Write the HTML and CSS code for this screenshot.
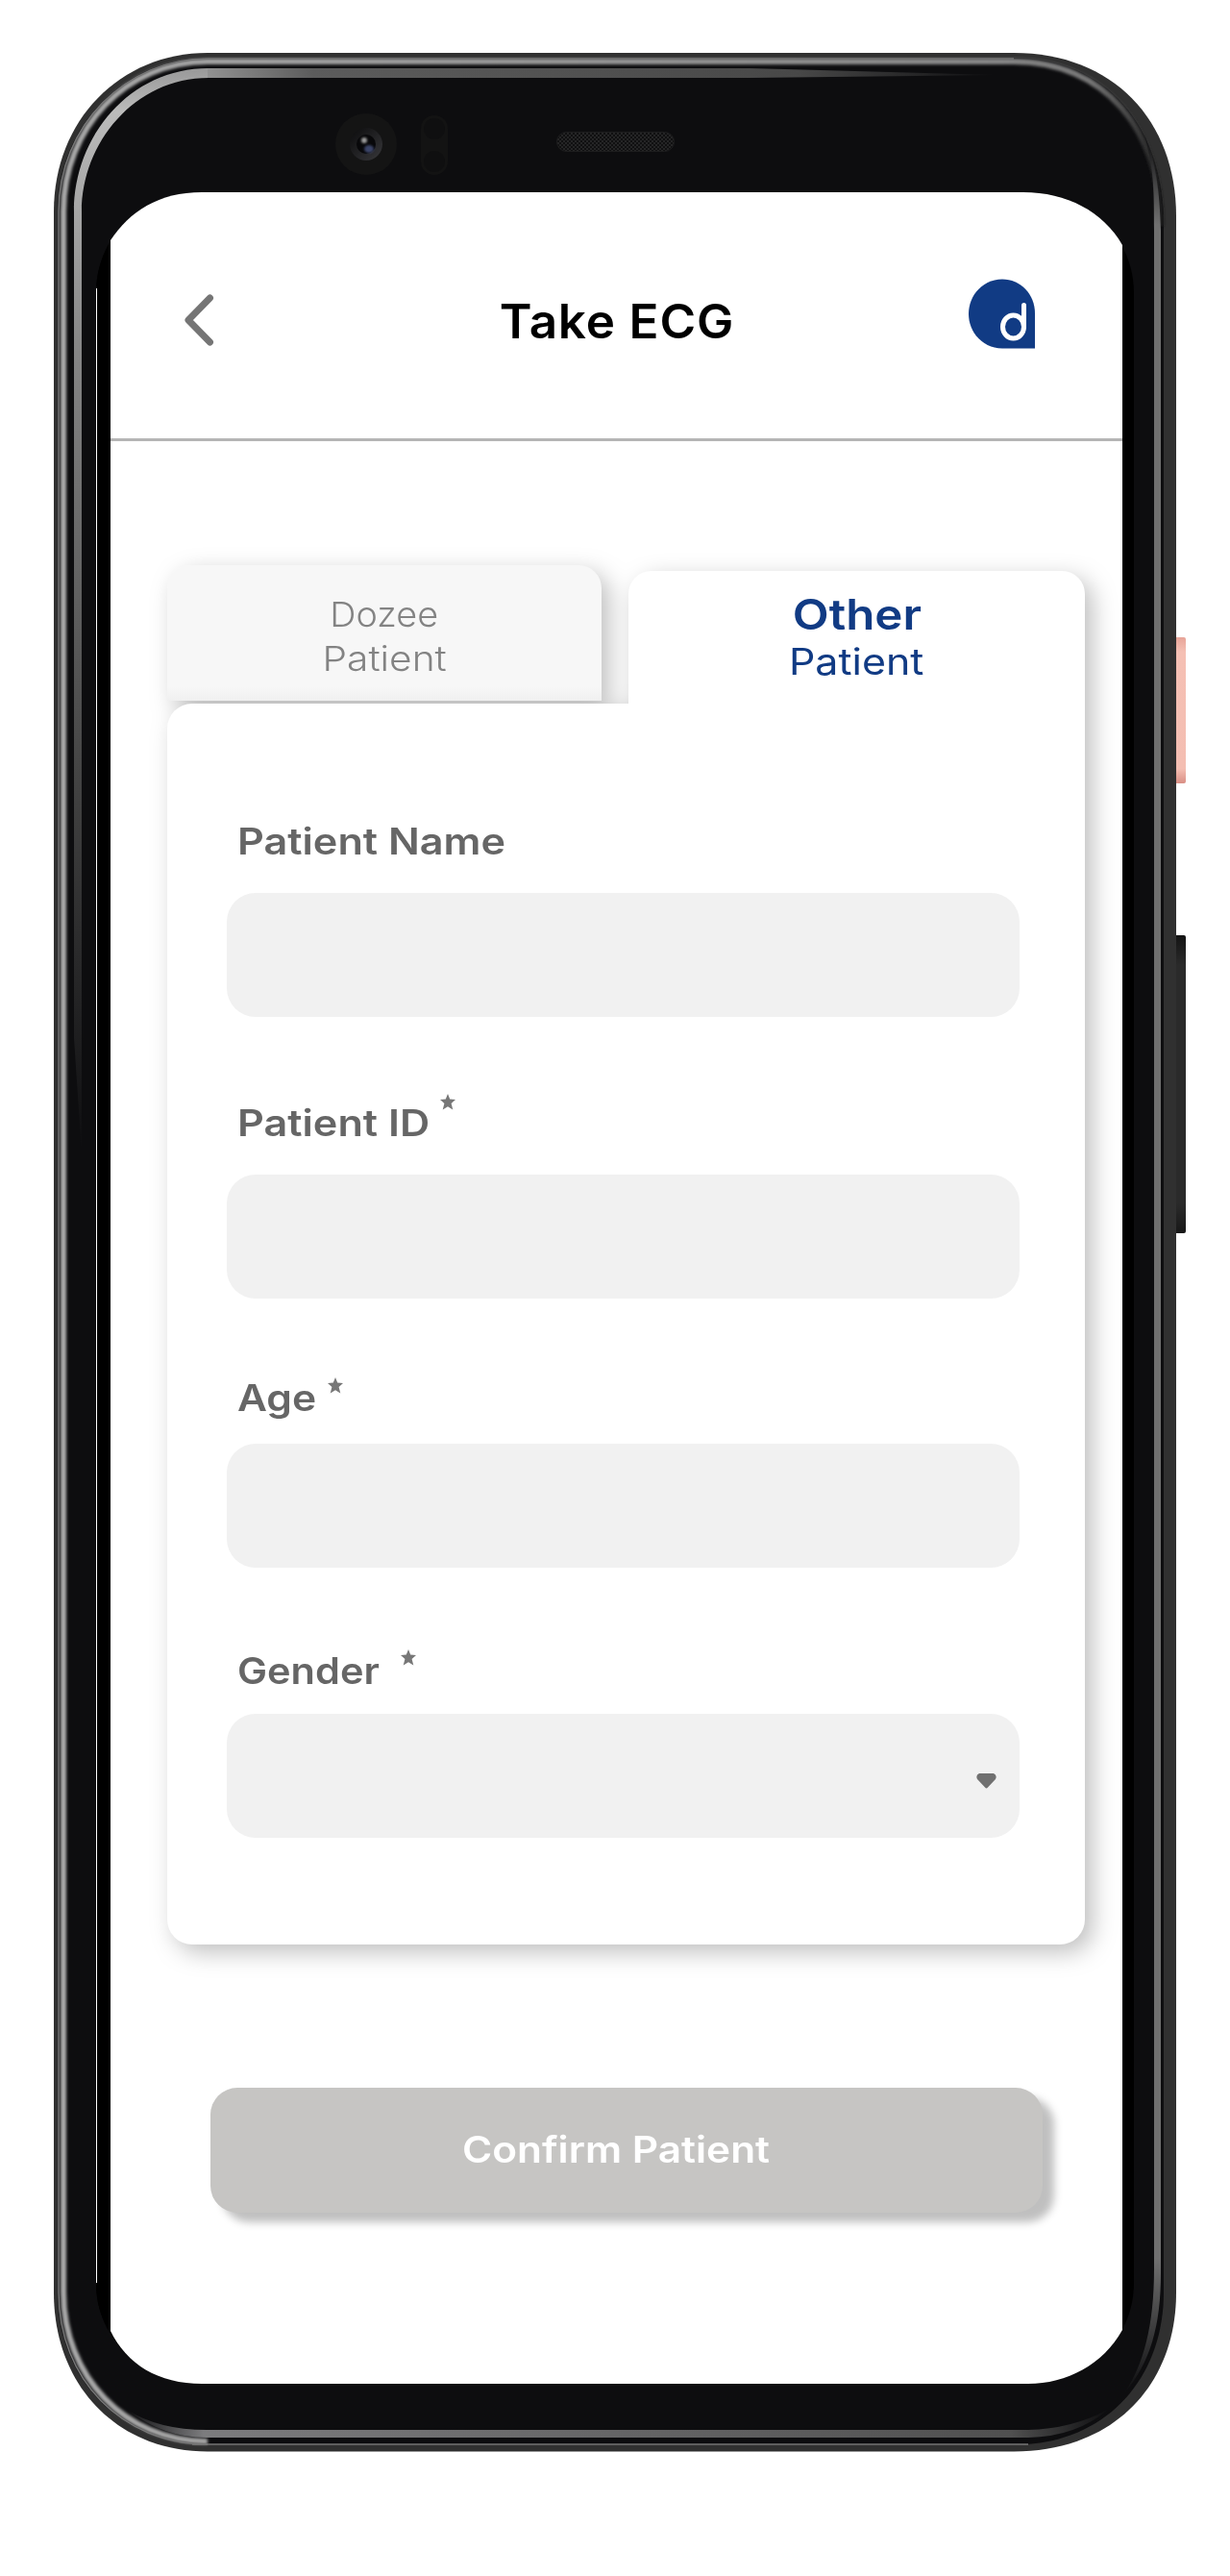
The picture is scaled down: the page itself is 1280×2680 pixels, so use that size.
FILE: index.html
```html
<!DOCTYPE html>
<html lang="en">
<head>
<meta charset="utf-8">
<title>Take ECG</title>
<link rel="stylesheet" href="styles.css">
</head>
<body>
<div class="phone">
  <svg class="frame" viewBox="0 0 1280 2680" aria-hidden="true">
    <defs>
      <linearGradient id="topGlow" gradientUnits="userSpaceOnUse" x1="200" y1="0" x2="1040" y2="0">
        <stop offset="0" stop-color="#999"/><stop offset=".15" stop-color="#5c5c5c"/><stop offset=".75" stop-color="#484848"/><stop offset="1" stop-color="#0d0d0f"/>
      </linearGradient>
      <linearGradient id="leftGlow" x1="0" y1="0" x2="0" y2="1">
        <stop offset="0" stop-color="#999"/><stop offset=".04" stop-color="#bbb"/><stop offset=".25" stop-color="#888"/><stop offset=".65" stop-color="#444"/><stop offset="1" stop-color="#0d0d0f"/>
      </linearGradient>
      <linearGradient id="rightGlow" gradientUnits="userSpaceOnUse" x1="0" y1="140" x2="0" y2="2490">
        <stop offset="0" stop-color="#0d0d0f"/><stop offset=".04" stop-color="#707070"/><stop offset=".94" stop-color="#707070"/><stop offset="1" stop-color="#0d0d0f"/>
      </linearGradient>
      <linearGradient id="rim" gradientUnits="userSpaceOnUse" x1="60" y1="0" x2="1215" y2="0">
        <stop offset="0" stop-color="#aaa"/><stop offset=".85" stop-color="#888"/><stop offset=".93" stop-color="#777"/><stop offset="1" stop-color="#151515"/>
      </linearGradient>
      <linearGradient id="bottomGlow" gradientUnits="userSpaceOnUse" x1="130" y1="0" x2="1155" y2="0">
        <stop offset="0" stop-color="#0d0d0f"/><stop offset=".08" stop-color="#7c7c7e"/><stop offset=".9" stop-color="#505050"/><stop offset="1" stop-color="#0d0d0f"/>
      </linearGradient>
      <linearGradient id="power" x1="0" y1="0" x2="0" y2="1">
        <stop offset="0" stop-color="#e7a498"/><stop offset=".1" stop-color="#f5c0b4"/><stop offset=".9" stop-color="#f4beb2"/><stop offset="1" stop-color="#d98f85"/>
      </linearGradient>
      <linearGradient id="volume" x1="0" y1="0" x2="0" y2="1">
        <stop offset="0" stop-color="#141414"/><stop offset=".1" stop-color="#2a2a2a"/><stop offset=".9" stop-color="#2a2a2a"/><stop offset="1" stop-color="#181818"/>
      </linearGradient>
      <linearGradient id="lens" x1="0" y1="0" x2="1" y2="1">
        <stop offset="0" stop-color="#0b0b0c"/><stop offset="1" stop-color="#38383b"/>
      </linearGradient>
      <pattern id="mesh" width="4" height="4" patternUnits="userSpaceOnUse">
        <path d="M0 0h4v4h-4z" fill="#101011"/><path d="M0 0h2v2h-2zM2 2h2v2h-2z" fill="#252526"/>
      </pattern>
      <filter id="soft1" x="-5%" y="-5%" width="110%" height="110%"><feGaussianBlur stdDeviation="1.6"/></filter>
      <filter id="soft2" x="-50%" y="-50%" width="200%" height="200%"><feGaussianBlur stdDeviation="1.2"/></filter>
    </defs>
    <rect x="1220" y="663" width="14" height="152" rx="2" fill="url(#power)"/>
    <rect x="1220" y="973" width="14" height="310" rx="2" fill="url(#volume)"/>
    <path d="M216 55H1055C1158 55 1224 125 1224 225V2385C1224 2482 1158 2550.500 1055 2550.500H216C122 2550.500 56 2482 56 2385V220C56 125 125 55 216 55Z" fill="#303030"/>
    <path d="M216 60H1055C1150 60 1211 130 1211 235V2385C1211 2475 1150 2543.500 1055 2543.500H216C126 2543.500 60 2476 60 2385V220C60 130 130 60 216 60Z" fill="#0d0d0f"/>
    <path d="M216 2540C130 2540 66 2472 66 2385V220C66 132 132 64 216 64H1055C1150 64 1208 135 1208 235" fill="none" stroke="url(#rim)" stroke-width="6" filter="url(#soft1)"/>
    <path d="M216 2543C127 2543 61 2475 61 2385V220C61 131 131 61 216 61H1055" fill="none" stroke="#777" stroke-width="1.500"/>
    <path d="M217 71C135 71 77 142 77 220V1080L85 1200V220C85 149 140 81 217 81Z" fill="url(#leftGlow)"/>
    <path d="M216 71H780L1040 78L780 81H216Z" fill="url(#topGlow)"/>
    <path d="M1191 140C1201 175 1201 200 1201 240V2360C1201 2420 1190 2460 1170 2490C1197 2458 1208 2420 1208 2365V240C1207 200 1203 170 1191 140Z" fill="url(#rightGlow)"/>
    <path d="M132 2507Q165 2528 215 2528H1070Q1115 2527 1153 2507Q1120 2535 1070 2536H215Q170 2536 132 2507Z" fill="url(#bottomGlow)"/>
    <path d="M200 2543H1070" stroke="#777" stroke-width="1.500"/>
    <path d="M210 200H1070C1130 200 1180 245 1180 305V2375C1180 2435 1130 2480 1070 2480H210C150 2480 100 2435 100 2375V305C100 245 150 200 210 200Z"/>
    <path d="M115 250C105 268 100 285 100 305V2375C100 2395 105 2412 115 2425Z"/>
    <path d="M100.500 300V2375" stroke="#fff" stroke-width="1"/>
    <path d="M210 200H1065C1110 200 1148 220 1168 255V2424C1148 2460 1110 2480 1070 2480H210C165 2480 132 2460 115 2425V250C135 220 165 200 210 200Z" fill="#fff"/>
    <circle cx="381" cy="150" r="32" fill="#141414"/><circle cx="381" cy="150" r="17" fill="url(#lens)"/><circle cx="381" cy="150" r="10" fill="#08080a"/>
    <ellipse cx="384" cy="155" rx="5" ry="4" fill="#3a4568" filter="url(#soft2)"/><circle cx="379" cy="146" r="3" fill="#999" filter="url(#soft2)"/>
    <rect x="438" y="120" width="28" height="62" rx="14" fill="#131313"/><circle cx="452" cy="134" r="11" fill="#0f0f10"/><circle cx="452" cy="168" r="11" fill="#0f0f10"/>
    <rect x="579.500" y="137.500" width="122" height="20" rx="10" fill="url(#mesh)" stroke="#1d1d1e"/>
  </svg>
  <main class="screen">
    <header class="header">
      <svg class="back" width="32" height="54" viewBox="0 0 32 54"><path d="M27.500 4L5 27L27.500 50" fill="none" stroke="#757575" stroke-width="7" stroke-linecap="round" stroke-linejoin="round"/></svg>
      <h1 class="title"><span class="t-title">Take ECG</span></h1>
      <svg class="logo" width="70" height="73" viewBox="0 0 70 73"><path d="M35 0.500C54 .5 69 16 69 36V72.500H35C15 72.500 0 56 0 36.500S15 .5 35 .5Z" fill="#113b84"/><ellipse cx="46.500" cy="50" rx="11" ry="12" fill="none" stroke="#fff" stroke-width="5"/><path d="M57.500 27.500V50" stroke="#fff" stroke-width="5" stroke-linecap="round"/></svg>
    </header>
    <section class="panel">
      <nav class="tabs">
        <div class="tab tab-dozee"><span class="t-dozee">Dozee</span><span class="t-patient">Patient</span></div>
        <div class="tab tab-other"><b class="t-other">Other</b><span class="t-opatient">Patient</span></div>
      </nav>
      <form class="card">
        <div class="field"><label><span class="l-name">Patient Name</span></label><div class="input"></div></div>
        <div class="field f-id"><label><span class="l-id">Patient ID</span><svg class="star s-id" viewBox="0 0 16 17"><path d="M8 0L10.200 5.600L16 6L11.600 10L13.300 16.500L8 13.300L2.700 16.500L4.400 10L0 6L5.800 5.600Z"/></svg></label><div class="input"></div></div>
        <div class="field f-age"><label><span class="l-age">Age</span><svg class="star s-age" viewBox="0 0 16 17"><path d="M8 0L10.200 5.600L16 6L11.600 10L13.300 16.500L8 13.300L2.700 16.500L4.400 10L0 6L5.800 5.600Z"/></svg></label><div class="input"></div></div>
        <div class="field f-gender"><label><span class="l-gender">Gender</span><svg class="star s-gender" viewBox="0 0 16 17"><path d="M8 0L10.200 5.600L16 6L11.600 10L13.300 16.500L8 13.300L2.700 16.500L4.400 10L0 6L5.800 5.600Z"/></svg></label><div class="input select"><svg width="21" height="16" viewBox="0 0 21 16"><path d="M3 0H18Q22 2 20 6L12 14.500Q10.500 16.500 9 14.500L1 6Q-1 2 3 0Z" fill="#707070"/></svg></div></div>
      </form>
    </section>
    <button class="confirm" type="button"><span class="t-confirm">Confirm Patient</span></button>
  </main>
</div>
</body>
</html>
```
FILE: styles.css
```css
* { box-sizing: border-box; }
body { margin: 0; background: #fff; font-family: "Inter", sans-serif; }
.phone { width: 1280px; height: 2680px; display: grid; }
.frame { grid-area: 1 / 1; width: 1280px; height: 2680px; }
.screen { grid-area: 1 / 1; z-index: 1; width: 1053px; height: 2280px; margin: 200px 0 0 115px; overflow: hidden; }
.screen span, .screen b { display: block; white-space: nowrap; }
.header { height: 259px; display: flex; border-bottom: 3px solid #b5b5b5; padding: 90px 90px 0 76px; justify-content: space-between; }
.back { margin-top: 16px; }
.title { margin: 15px 0 0 52px; font-size: 49px; line-height: 60px; font-weight: 600; letter-spacing: .8px; }
.t-title { transform: scaleX(1.045); }
.panel { margin: 129px 39px 0 59px; filter: drop-shadow(8px 8px 12px rgba(0,0,0,.25)); }
.tabs { display: flex; gap: 28px; height: 144px; }
.tab { display: flex; flex-direction: column; align-items: center; border-radius: 24px 24px 0 0; }
.tab-dozee { width: 452px; height: 141px; background: linear-gradient(#f7f7f7 90%, #f0f0f0); color: #838383; font-size: 36px; line-height: 46px; font-weight: 300; padding-top: 28px; }
.t-dozee { transform: scaleX(1.05); }
.t-patient { transform: scaleX(1.13); }
.tab-other { width: 475px; height: 144px; margin-top: 6px; background: #fff; color: #113b84; font-size: 38px; line-height: 49px; padding-top: 21px; }
.tab-other b { font-size: 44px; font-weight: 600; transform: scaleX(1.12); }
.t-opatient { transform: scaleX(1.13); }
.card { height: 1291px; border-radius: 26px 0 26px 26px; background: #fff; padding: 116px 68px 0 62px; color: #666; }
.field { height: 293px; }
.f-id { height: 292px; }
.f-age { height: 281px; }
label { display: flex; align-items: flex-start; height: 81px; padding-left: 11px; font-size: 38px; line-height: 50px; font-weight: 600; }
label span { transform-origin: left; flex: none; }
.l-name { margin-top: 2px; transform: scaleX(1.137); }
.l-id { width: 211px; margin-top: 2px; transform: scaleX(1.137); }
.l-age { width: 94px; margin-top: -4px; transform: scaleX(1.12); }
.l-gender { width: 170px; margin-top: -1px; transform: scaleX(1.092); }
.f-age label, .f-gender label { height: 69px; }
.input { height: 129px; border-radius: 30px; background: #f1f1f1; }
.select { display: flex; align-items: center; justify-content: flex-end; padding: 10px 24px 0 0; }
.star { width: 16px; height: 17px; fill: #777; }
.s-id { margin-top: -3px; }
.s-gender { margin-top: 2px; }
.confirm { display: block; width: 866px; height: 130px; margin: 149px 0 0 104px; border: 0; border-radius: 28px; background: #c6c5c3; color: #fff; font: 600 38px/46px "Inter", sans-serif; padding: 0 22px 2px 0; box-shadow: 12px 10px 8px rgba(0,0,0,.25); }
.t-confirm { transform: scaleX(1.115); }
```
